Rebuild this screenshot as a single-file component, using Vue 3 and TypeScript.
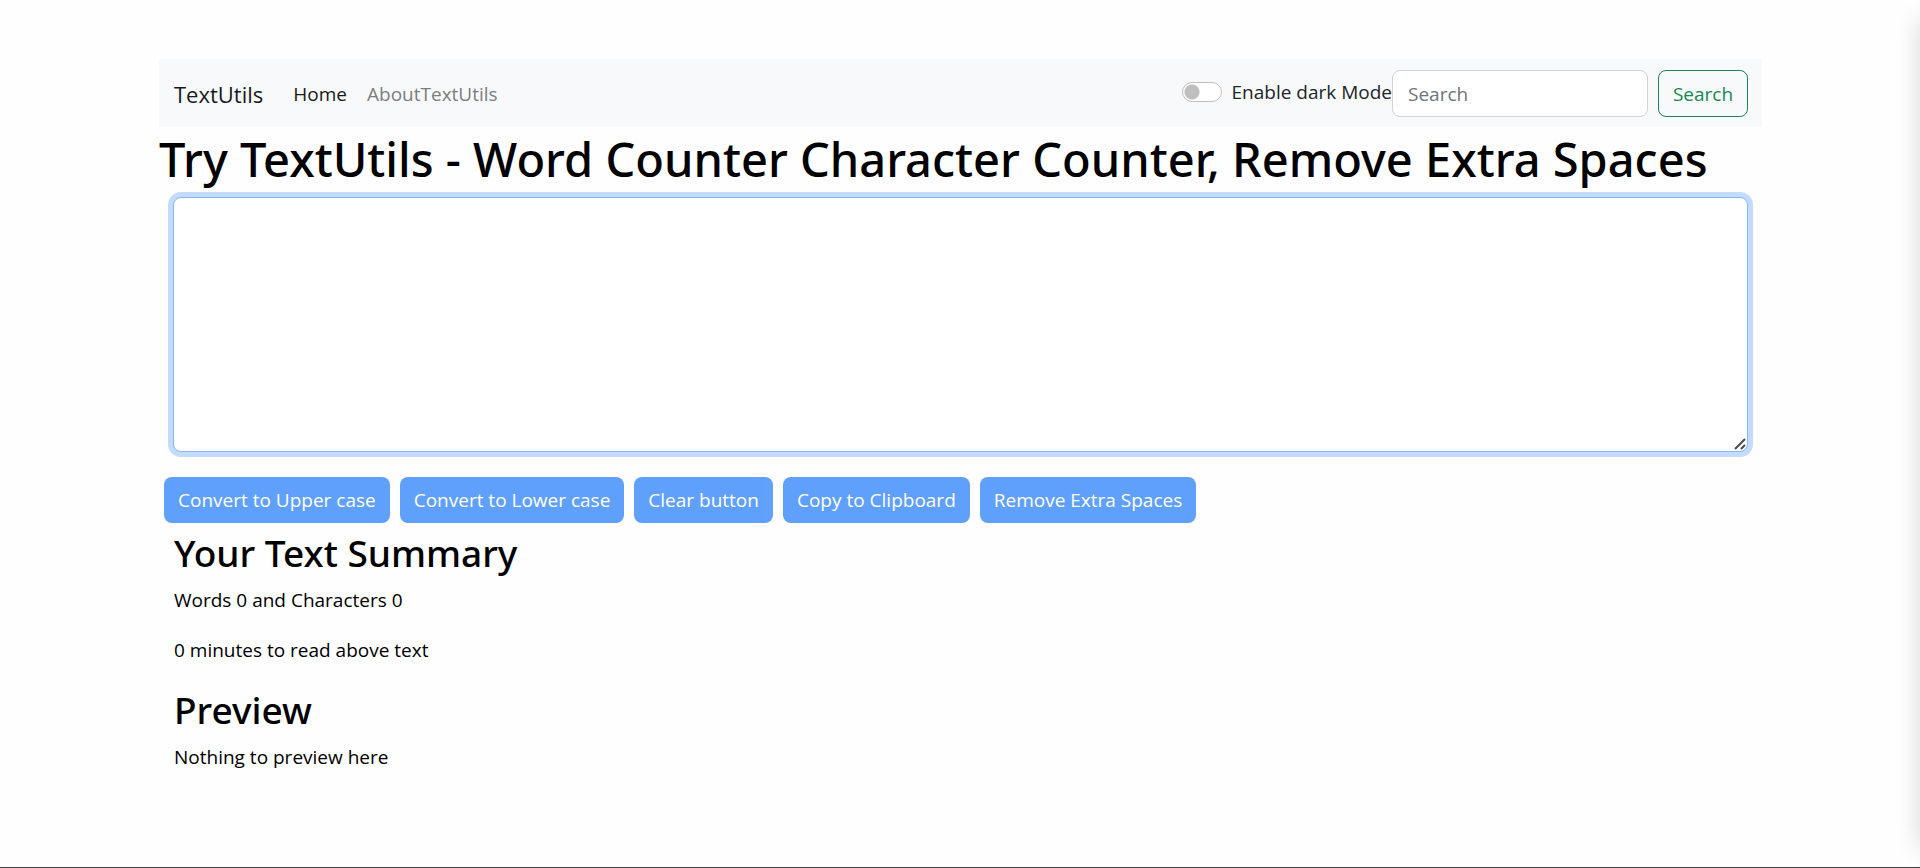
<script setup lang="ts">
import { computed, onMounted, ref } from 'vue'

const text = ref('')
const query = ref('')
const darkMode = ref(false)
const editor = ref<HTMLTextAreaElement | null>(null)

const words = computed(() => text.value.split(/\s+/).filter((w) => w.length > 0).length)
const minutes = computed(() => 0.008 * words.value)
const isEmpty = computed(() => text.value.length === 0)

const actions: { label: string; run: () => void }[] = [
  { label: 'Convert to Upper case', run: () => { text.value = text.value.toUpperCase() } },
  { label: 'Convert to Lower case', run: () => { text.value = text.value.toLowerCase() } },
  { label: 'Clear button', run: () => { text.value = '' } },
  { label: 'Copy to Clipboard', run: () => { void navigator.clipboard.writeText(text.value) } },
  { label: 'Remove Extra Spaces', run: () => { text.value = text.value.split(/[ ]+/).join(' ') } },
]

onMounted(() => editor.value?.focus())
</script>

<template>
  <div class="page" :class="{ dark: darkMode }">
    <div class="shell">
      <nav class="navbar">
        <a class="brand" href="#">TextUtils</a>
        <div class="links">
          <a class="link active" href="#">Home</a>
          <a class="link" href="#about">AboutTextUtils</a>
        </div>
        <div class="switch">
          <input id="dark-mode" v-model="darkMode" class="toggle" type="checkbox" role="switch" />
          <label for="dark-mode">Enable dark Mode</label>
        </div>
        <form class="search" role="search" @submit.prevent>
          <input v-model="query" class="field" type="search" placeholder="Search" aria-label="Search" />
          <button class="search-button" type="submit">Search</button>
        </form>
      </nav>

      <main>
        <h1>Try TextUtils - Word Counter Character Counter, Remove Extra Spaces</h1>
        <div class="editor-wrap">
          <textarea ref="editor" v-model="text" class="editor" rows="8" aria-label="Text to analyse"></textarea>
          <svg class="grip" viewBox="0 0 12 12" aria-hidden="true">
            <path d="M1 11 11 1M7 11l4-4" />
          </svg>
        </div>
        <div class="actions">
          <button v-for="a in actions" :key="a.label" type="button" :disabled="isEmpty" @click="a.run">
            {{ a.label }}
          </button>
        </div>
        <section class="summary">
          <h2>Your Text Summary</h2>
          <p>Words {{ words }} and Characters {{ text.length }}</p>
          <p>{{ minutes }} minutes to read above text</p>
          <h2>Preview</h2>
          <p>{{ isEmpty ? 'Nothing to preview here' : text }}</p>
        </section>
      </main>
    </div>
    <div class="edge" aria-hidden="true"></div>
  </div>
</template>

<style>
body {
  margin: 0;
  background: #fefefe;
}
</style>

<style scoped>
* {
  box-sizing: border-box;
}

.page {
  min-height: 100vh;
  padding-top: 59px;
  border-bottom: 1px solid #3c3c3c;
  background: #fefefe;
  color: #000;
  font-family: "Segoe UI", "Open Sans", "Noto Sans", sans-serif;
  font-size: 19px;
  line-height: 30px;
  overflow-x: hidden;
}

.page.dark {
  background: #042743;
  color: #fff;
}

.shell {
  margin: 0 158px 0 159px;
}

.navbar {
  display: flex;
  align-items: center;
  padding: 11px 14px 10px 15px;
  background: #f8f9fb;
  color: #212529;
}

.brand {
  margin-right: 20px;
  color: #18191b;
  font-size: 22px;
  text-decoration: none;
}

.links {
  display: flex;
  flex: 1;
}

.link {
  padding: 0 10px;
  color: #7b7d80;
  text-decoration: none;
}

.link.active {
  color: #18191b;
}

.switch {
  display: flex;
  align-items: center;
  gap: 10px;
  padding-bottom: 4px;
}

.toggle {
  appearance: none;
  width: 40px;
  height: 20px;
  margin: 0;
  border: 1px solid #bfbfbf;
  border-radius: 10px;
  background: radial-gradient(circle at 9px 9px, #bfbfbf 7px, #fff 8px);
}

.toggle:checked {
  background: radial-gradient(circle at 29px 9px, #fff 7px, #0d6efd 8px);
}

.search {
  display: flex;
  gap: 10px;
}

.field {
  width: 256px;
  height: 47px;
  padding: 0 15px;
  border: 1px solid #ced4da;
  border-radius: 8px;
  background: #fff;
  font: inherit;
}

.field::placeholder {
  color: #6c757d;
  opacity: 1;
}

.search-button {
  width: 90px;
  height: 47px;
  padding: 0;
  border: 1px solid #198754;
  border-radius: 8px;
  background: transparent;
  color: #198754;
  font: inherit;
}

h1,
h2 {
  font-family: "Segoe UI", "Noto Sans", "Open Sans", sans-serif;
  font-weight: 500;
}

h1 {
  margin: 0 0 10px;
  padding-top: 4px;
  font-size: 47px;
  line-height: 56px;
}

h2 {
  margin: 0 0 7px;
  font-size: 37px;
  line-height: 50px;
}

.editor-wrap {
  position: relative;
  margin: 0 14px 20px 14px;
}

.editor {
  display: block;
  width: 100%;
  height: 255px;
  padding: 8px 15px;
  border: 1px solid #86b7fe;
  border-radius: 8px;
  outline: 0;
  background: #fff;
  box-shadow: 0 0 0 5px #c2dbfe;
  font: inherit;
  resize: none;
}

.grip {
  position: absolute;
  right: 2px;
  bottom: 2px;
  width: 12px;
  height: 12px;
  fill: none;
  stroke: #4a4a4a;
  stroke-width: 2;
}

.actions {
  display: flex;
  flex-wrap: wrap;
  gap: 10px;
  padding: 5px;
}

.actions button {
  height: 46px;
  padding: 0 14px;
  border: 0;
  border-radius: 8px;
  background: #0d6efd;
  color: #fff;
  font: inherit;
}

.actions button:disabled {
  opacity: 0.65;
}

.summary {
  padding: 0 15px;
}

p {
  margin: 0 0 20px;
}

.edge {
  position: fixed;
  top: 20px;
  bottom: 20px;
  left: 100%;
  width: 20px;
  box-shadow: 0 0 24px rgba(0, 0, 0, 0.17);
}
</style>
